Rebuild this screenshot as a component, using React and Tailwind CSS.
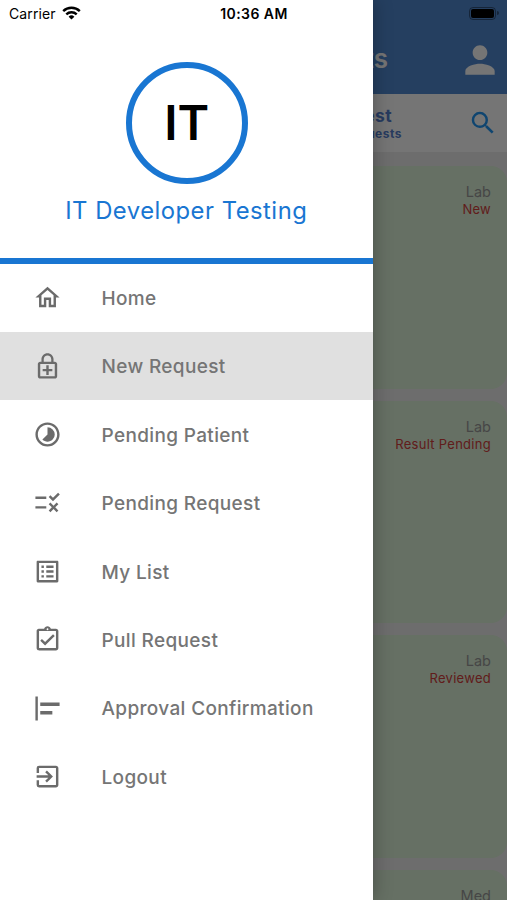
import React from "react";
import {
  MdOutlineHome,
  MdOutlineEnhancedEncryption,
  MdTimelapse,
  MdRule,
  MdOutlineListAlt,
  MdOutlineAssignmentTurnedIn,
  MdAlignHorizontalLeft,
  MdExitToApp,
  MdPerson,
  MdSearch,
} from "react-icons/md";

const menuItems = [
  { label: "Home", icon: MdOutlineHome },
  { label: "New Request", icon: MdOutlineEnhancedEncryption, active: true },
  { label: "Pending Patient", icon: MdTimelapse },
  { label: "Pending Request", icon: MdRule },
  { label: "My List", icon: MdOutlineListAlt },
  { label: "Pull Request", icon: MdOutlineAssignmentTurnedIn },
  { label: "Approval Confirmation", icon: MdAlignHorizontalLeft },
  { label: "Logout", icon: MdExitToApp },
];

const requests = [
  { id: 1, type: "Lab", status: "New" },
  { id: 2, type: "Lab", status: "Result Pending" },
  { id: 3, type: "Lab", status: "Reviewed" },
  { id: 4, type: "Med", status: "" },
];

function RequestsScreen() {
  return (
    <div className="flex h-full flex-col bg-[#eeeeee]">
      <header className="flex h-[94px] shrink-0 items-end justify-end bg-[#5289d1] pr-[9px] pb-[16px]">
        <h1 className="mr-[70px] text-[26px] leading-[38px] font-semibold text-white">Requests</h1>
        <MdPerson size={44} className="-mr-[4px] -mb-[4px] text-white" />
      </header>

      <div className="flex h-[58px] shrink-0 items-center justify-end bg-white pr-[9px]">
        <div className="mr-[66px] pt-[2px] text-[#5681cf]">
          <div className="mr-[10px] text-right text-[17.5px] leading-[20px] font-bold tracking-[0.4px]">New Request</div>
          <div className="text-right text-[12px] leading-[16px] font-bold tracking-[0.5px]">All Requests</div>
        </div>
        <MdSearch size={30} className="text-[#2196f3]" />
      </div>

      <div className="flex flex-col gap-[12px] pt-[14px]">
        {requests.map((r) => (
          <article
            key={r.id}
            className="h-[222.7px] shrink-0 rounded-[16px] bg-[#def3d9] pt-[17px] pr-[16px] text-right"
          >
            <div className="text-[14.5px] leading-[18px] text-[#9a9a9a]">{r.type}</div>
            <div className="text-[13px] leading-[17px] tracking-[0.28px] text-[#d3403c]">{r.status}</div>
          </article>
        ))}
      </div>
    </div>
  );
}

function Drawer() {
  return (
    <aside className="absolute inset-y-0 left-0 w-[372.5px] bg-white shadow-[0_0_18px_rgba(0,0,0,0.3)]">
      <div className="flex h-[263.5px] flex-col items-center border-b-6 border-[#1976d2] pt-[62px]">
        <div className="ml-px flex size-[122px] items-center justify-center rounded-full border-6 border-[#1976d2] text-[48px] leading-none font-semibold text-black">
          IT
        </div>
        <div className="mt-[11px] text-[23.8px] leading-[32px] tracking-[0.5px] text-[#1976d2]">
          IT Developer Testing
        </div>
      </div>

      <nav>
        {menuItems.map(({ label, icon: Icon, active }) => (
          <a
            key={label}
            className={`flex h-[68.4px] items-center pl-[33px] text-[#757575] ${
              active ? "bg-[#e0e0e0]" : ""
            }`}
          >
            <Icon size={29} className="shrink-0 text-[#6b6b6b]" />
            <span className="ml-[39.5px] pt-[3px] text-[19px] font-medium tracking-[0.35px]">{label}</span>
          </a>
        ))}
      </nav>
    </aside>
  );
}

function StatusBar() {
  return (
    <div className="absolute inset-x-0 top-0 flex h-[26px] items-center justify-between pr-[8px] pl-[9px] text-black">
      <div className="flex flex-1 items-center gap-[6px] text-[14px] tracking-[0.1px]">
        Carrier
        <svg width="19" height="14" viewBox="0 0 19 14" fill="none" stroke="currentColor" strokeWidth="2.4">
          <path d="M1.2 5.2a11.8 11.8 0 0 1 16.6 0" />
          <path d="M4.3 8.4a7.4 7.4 0 0 1 10.4 0" />
          <path d="M9.5 13.6 6.6 10.7a4.1 4.1 0 0 1 5.8 0z" fill="currentColor" stroke="none" />
        </svg>
      </div>
      <div className="text-[14px] font-semibold tracking-[0.45px]">10:36 AM</div>
      <div className="flex flex-1 items-center justify-end">
        <div className="flex h-[13px] w-[27px] rounded-[4px] border border-black/40 p-[1px]">
          <div className="flex-1 rounded-[2px] bg-black" />
        </div>
        <div className="ml-[1px] h-[4px] w-[2px] rounded-r-full bg-black/40" />
      </div>
    </div>
  );
}

export default function App() {
  return (
    <div className="relative h-[900px] w-[507px] overflow-hidden font-[Inter,sans-serif]">
      <RequestsScreen />
      <div className="absolute inset-0 bg-black/54" />
      <Drawer />
      <StatusBar />
    </div>
  );
}
